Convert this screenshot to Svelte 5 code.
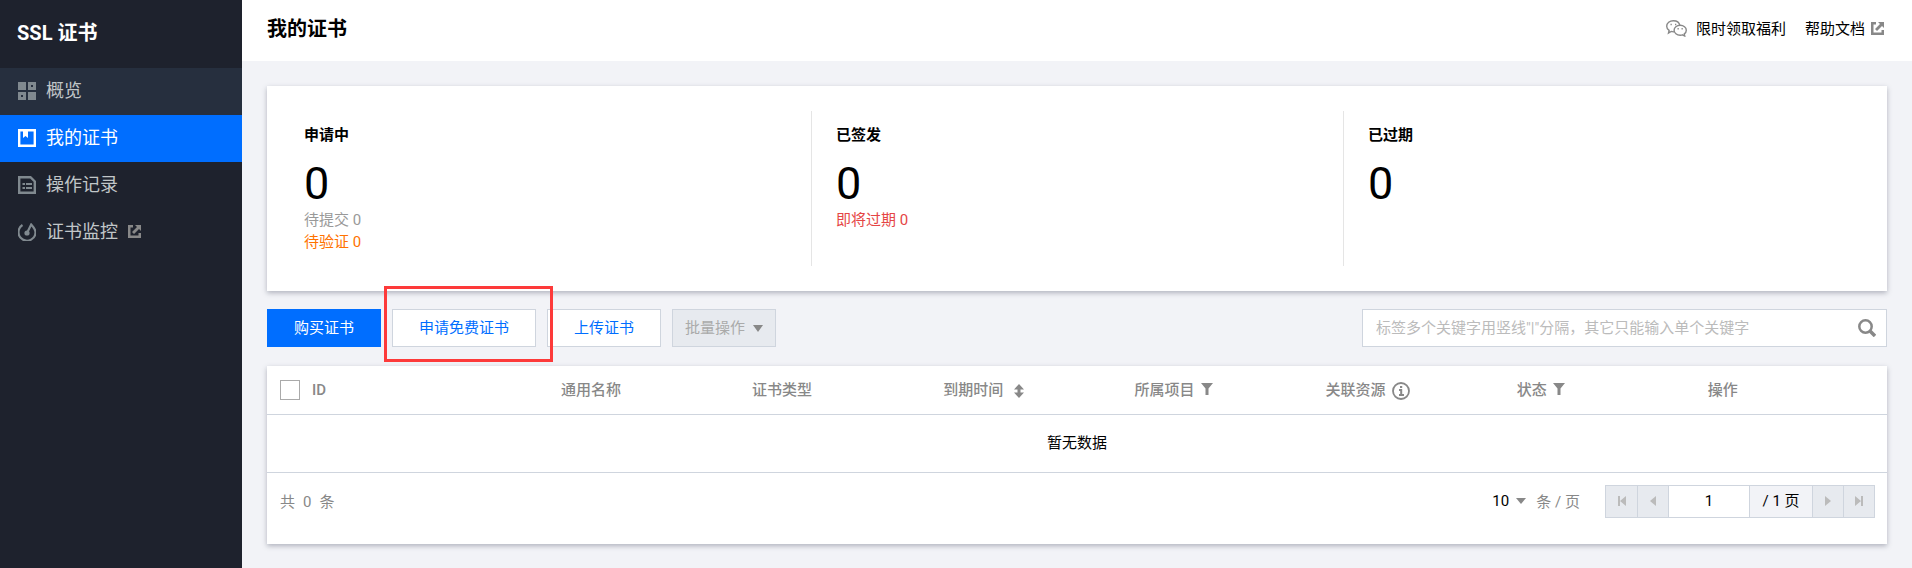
<script lang="ts">
	const nav = [
		{ id: 'overview', title: '概览', state: 'hover' },
		{ id: 'certs', title: '我的证书', state: 'active' },
		{ id: 'logs', title: '操作记录', state: '' },
		{ id: 'monitor', title: '证书监控', state: '' }
	];

	const stats = [
		{
			title: '申请中',
			count: 0,
			lines: [
				{ text: '待提交', count: 0, tone: 'muted' },
				{ text: '待验证', count: 0, tone: 'warning' }
			]
		},
		{ title: '已签发', count: 0, lines: [{ text: '即将过期', count: 0, tone: 'danger' }] },
		{ title: '已过期', count: 0, lines: [] }
	];

	const columns = [
		{ title: '通用名称', icon: '' },
		{ title: '证书类型', icon: '' },
		{ title: '到期时间', icon: 'sort' },
		{ title: '所属项目', icon: 'filter' },
		{ title: '关联资源', icon: 'info' },
		{ title: '状态', icon: 'filter' },
		{ title: '操作', icon: '' }
	];

	let keyword = $state('');
	let page = $state('1');
</script>

{#snippet external()}
	<svg class="external" width="13" height="13" viewBox="0 0 13 13" aria-hidden="true">
		<path d="M5 0v2.500H2.500v8h8V8H13v5H0V0z" fill="currentColor" />
		<path d="M7 0h6v6l-2-2-5 5-2-2 5-5z" fill="currentColor" />
	</svg>
{/snippet}

<div class="layout">
	<aside class="sidebar">
		<h2>SSL 证书</h2>
		<nav>
			{#each nav as item}
				<a href="#{item.id}" class="nav-item {item.state}">
					<svg width="18" height="18" viewBox="0 0 18 18" fill="none" stroke="currentColor" stroke-width="2" aria-hidden="true">
						{#if item.id === 'overview'}
							<path d="M0 0h8v8H0z" fill="currentColor" stroke="none" />
							<path d="M10 10h8v8h-8z" fill="currentColor" stroke="none" />
							<path d="M11.500 1.500h5v5h-5zM1.500 11.500h5v5h-5z" stroke-width="3" />
						{:else if item.id === 'certs'}
							<path d="M1.200 1.200h15.600v15.600H1.200z" stroke-width="2.400" />
							<path d="M5 2h5v7L7.500 7 5 9z" fill="currentColor" stroke="none" />
						{:else if item.id === 'logs'}
							<path d="M1.200 1.200h11.300l4.300 4.300v11.300H1.200z" stroke-width="2.400" />
							<path d="M4.500 8H7M8 8h6M4.500 12H7M8 12h6" />
						{:else}
							<path d="M4.500 2A8.500 8.500 0 1 0 17.500 9.500C17.500 6.500 15.500 4 13.200 1.500L9.500 9" stroke-width="2.200" />
							<circle cx="9" cy="10" r="2.600" fill="currentColor" stroke="none" />
						{/if}
					</svg>
					<span>{item.title}</span>
					{#if item.id === 'monitor'}{@render external()}{/if}
				</a>
			{/each}
		</nav>
	</aside>

	<main>
		<header>
			<h1>我的证书</h1>
			<div class="links">
				<a href="#gift">
					<svg class="wechat" width="21" height="17" viewBox="0 0 21 17" fill="none" stroke="#888" stroke-width="1.400" aria-hidden="true">
						<path d="M8 11.800c-1 .1-2-.1-2.800-.4L2.500 13l.6-2.600C1.500 9.300.7 7.900.7 6.300.7 3.200 3.700.7 7.300.7c3.300 0 6 1.900 6.500 4.600" />
						<path d="M14.200 5.300c3.400 0 6.100 2.200 6.100 4.900 0 1.500-.8 2.800-2 3.700l.4 2.100-2.200-1.200c-.7.3-1.500.4-2.300.4-3.400 0-6.100-2.200-6.100-5s2.700-4.900 6.100-4.900z" />
						<path d="M4.500 4.500h1.300M9 4.500h1.300M11.500 8.800h1.300M15.500 8.800h1.300" stroke-width="1.500" />
					</svg>
					限时领取福利
				</a>
				<a href="#docs">帮助文档 {@render external()}</a>
			</div>
		</header>

		<div class="content">
			<section class="card stats">
				{#each stats as stat}
					<div class="stat">
						<h3>{stat.title}</h3>
						<strong>{stat.count}</strong>
						{#each stat.lines as line}
							<a href="#certs" class={line.tone}>{line.text} {line.count}</a>
						{/each}
					</div>
				{/each}
			</section>

			<div class="toolbar">
				<button type="button" class="btn primary">购买证书</button>
				<div class="marked">
					<button type="button" class="btn">申请免费证书</button>
				</div>
				<button type="button" class="btn">上传证书</button>
				<button type="button" class="btn batch" disabled>
					批量操作
					<svg width="10" height="7" viewBox="0 0 10 7" aria-hidden="true"><path d="M0 0h10L5 7z" fill="#888" /></svg>
				</button>
				<form class="search" role="search">
					<input type="text" aria-label="搜索证书" placeholder={'标签多个关键字用竖线"|"分隔，其它只能输入单个关键字'} bind:value={keyword} />
					<button type="button" aria-label="搜索">
						<svg width="18" height="18" viewBox="0 0 18 18" fill="none" stroke="#888" aria-hidden="true">
							<circle cx="7.500" cy="7.500" r="6.200" stroke-width="2.500" />
							<path d="M12 12l5 5" stroke-width="3.500" />
						</svg>
					</button>
				</form>
			</div>

			<section class="card">
				<table>
					<thead>
						<tr>
							<th class="id">
								<label><input type="checkbox" aria-label="全选" /> ID</label>
							</th>
							{#each columns as column}
								<th class:sortable={column.icon === 'sort'}>
									<span>{column.title}</span>
									{#if column.icon === 'sort'}
										<svg width="10" height="14" viewBox="0 0 10 14" aria-hidden="true"><path d="M5 0l5 5.500H6.500v3H10L5 14 0 8.500h3.500v-3H0z" fill="#888" /></svg>
									{:else if column.icon === 'filter'}
										<svg class="filter" width="12" height="12" viewBox="0 0 12 12" aria-hidden="true"><path d="M0 0h12L7.500 5.500V12h-3V5.500z" fill="#888" /></svg>
									{:else if column.icon === 'info'}
										<svg width="18" height="18" viewBox="0 0 18 18" fill="none" stroke="#888" stroke-width="2" aria-hidden="true">
											<circle cx="9" cy="9" r="8" stroke-width="1.800" />
											<path d="M8 5h2.200M7 8h2.200v5M7 13h5" />
										</svg>
									{/if}
								</th>
							{/each}
						</tr>
					</thead>
					<tbody>
						<tr><td colspan="8">暂无数据</td></tr>
					</tbody>
				</table>

				<div class="footer">
					<div class="total"><span>共</span><span>0</span><span>条</span></div>
					<div class="pager">
						<div class="size">
							<select aria-label="每页条数">
								<option>10</option>
								<option>20</option>
								<option>50</option>
							</select>
							<svg width="10" height="6" viewBox="0 0 10 6" aria-hidden="true"><path d="M0 0h10L5 6z" fill="#888" /></svg>
						</div>
						<span class="unit">条 / 页</span>
						<div class="pages">
							<button type="button" aria-label="首页" disabled>
								<svg width="8" height="10" viewBox="0 0 8 10"><path d="M0 0h2v10H0zM8 0v10L2 5z" fill="#bbb" /></svg>
							</button>
							<button type="button" aria-label="上一页" disabled>
								<svg width="6" height="10" viewBox="0 0 6 10"><path d="M6 0v10L0 5z" fill="#bbb" /></svg>
							</button>
							<input type="text" aria-label="页码" bind:value={page} />
							<span class="count">/ 1 页</span>
							<button type="button" aria-label="下一页" disabled>
								<svg width="6" height="10" viewBox="0 0 6 10"><path d="M0 0v10l6-5z" fill="#bbb" /></svg>
							</button>
							<button type="button" aria-label="末页" disabled>
								<svg width="8" height="10" viewBox="0 0 8 10"><path d="M6 0h2v10H6zM0 0v10l6-5z" fill="#bbb" /></svg>
							</button>
						</div>
					</div>
				</div>
			</section>
		</div>
	</main>
</div>

<style>
	:global(body) {
		background: #f2f3f7;
	}

	.layout,
	.layout * {
		box-sizing: border-box;
	}

	.layout {
		display: flex;
		min-height: 100vh;
		font-family: Roboto, 'Noto Sans CJK SC', sans-serif;
		font-size: 15px;
		line-height: 22px;
		color: #000;
	}

	h1,
	h2,
	h3 {
		margin: 0;
	}

	a {
		color: inherit;
		text-decoration: none;
	}

	svg {
		flex: none;
	}

	button,
	input,
	select {
		font: inherit;
		border-radius: 0;
	}

	.sidebar {
		flex: none;
		width: 242px;
		background: #1e222d;
	}

	.sidebar h2 {
		padding: 0 17px 2px;
		font-size: 20px;
		line-height: 66px;
		color: #fff;
	}

	.nav-item {
		display: flex;
		align-items: center;
		gap: 10px;
		height: 47px;
		padding: 0 18px 2px;
		font-size: 18px;
		color: #c1c6c8;
	}

	.nav-item svg {
		color: #80898f;
	}

	.nav-item .external,
	.links .external {
		color: #888;
	}

	.nav-item.hover {
		background: #262f3e;
	}

	.nav-item.active,
	.nav-item.active svg {
		background: #006eff;
		color: #fff;
	}

	main {
		flex: 1;
		min-width: 0;
	}

	header {
		display: flex;
		align-items: center;
		justify-content: space-between;
		height: 61px;
		padding: 0 28px 4px 25px;
		background: #fff;
	}

	h1 {
		font-size: 20px;
	}

	.links {
		display: flex;
		gap: 19px;
	}

	.links a {
		display: flex;
		align-items: center;
		gap: 6px;
	}

	.wechat {
		margin-right: 3px;
	}

	.content {
		padding: 25px;
	}

	.card {
		background: #fff;
		box-shadow: 0 2px 5px rgba(54, 58, 80, 0.35);
	}

	.stats {
		display: grid;
		grid-template-columns: repeat(3, 1fr);
		padding: 25px 12px;
	}

	.stat {
		display: flex;
		flex-direction: column;
		align-items: flex-start;
		min-height: 155px;
		padding: 13px 25px;
	}

	.stat + .stat {
		padding-left: 24px;
		border-left: 1px solid #e5e5e5;
	}

	.stat h3 {
		font-size: 15px;
	}

	.stat strong {
		padding: 15px 0 2px;
		font-size: 45px;
		line-height: 46px;
		font-weight: 400;
	}

	.muted {
		color: #999;
	}

	.warning {
		color: #ff7200;
	}

	.danger {
		color: #e54545;
	}

	.toolbar {
		display: flex;
		gap: 11px;
		padding: 18px 0 19px;
	}

	.btn {
		height: 38px;
		padding: 0 26px;
		border: 1px solid #cfd5de;
		background: #fff;
		color: #006eff;
	}

	.primary {
		border-color: #006eff;
		background: #006eff;
		color: #fff;
	}

	.batch {
		display: flex;
		align-items: center;
		gap: 8px;
		padding: 0 12px;
		background: #e7eaef;
		color: #aaa;
	}

	.marked {
		position: relative;
	}

	/* callout frame around the free certificate button */
	.marked::after {
		content: '';
		position: absolute;
		z-index: 1;
		inset: -23px -17px -15px -8px;
		border: 3px solid #fd3a3a;
		pointer-events: none;
	}

	.search {
		display: flex;
		align-items: center;
		width: 525px;
		height: 38px;
		margin-left: auto;
		border: 1px solid #cfd5de;
		background: #fff;
	}

	.search input {
		flex: 1;
		min-width: 0;
		padding: 0 13px;
		border: 0;
		outline: 0;
		background: none;
	}

	.search input::placeholder {
		color: #bbb;
	}

	.search button {
		display: flex;
		padding: 0 10px;
		border: 0;
		background: none;
	}

	table {
		width: 100%;
		table-layout: fixed;
		border-collapse: collapse;
	}

	th {
		width: 11.8%;
		height: 48px;
		padding: 0 12px;
		text-align: left;
		font-weight: 500;
		color: #888;
	}

	th.id {
		width: auto;
		padding-left: 13px;
	}

	th label {
		display: flex;
		align-items: center;
		gap: 12px;
	}

	th svg {
		margin-left: 3px;
		vertical-align: middle;
	}

	th .filter {
		vertical-align: baseline;
	}

	th.sortable svg {
		margin-left: 7px;
	}

	input[type='checkbox'] {
		appearance: none;
		width: 20px;
		height: 20px;
		margin: 0;
		border: 1px solid #aaa;
		background: #fff;
	}

	tr {
		border-bottom: 1px solid #cfd5de;
	}

	td {
		height: 58px;
		padding: 0;
		text-align: center;
	}

	.footer {
		display: flex;
		align-items: flex-start;
		justify-content: space-between;
		padding: 12px 12px 25px 13px;
		line-height: 34px;
		color: #888;
	}

	.total {
		display: flex;
		gap: 8px;
	}

	.pager {
		display: flex;
		height: 33px;
	}

	.size {
		display: flex;
		align-items: center;
		gap: 7px;
	}

	.size select {
		appearance: none;
		width: 17px;
		padding: 0;
		border: 0;
		background: none;
		color: #000;
	}

	.unit {
		margin: 0 25px 0 10px;
	}

	.pages {
		display: flex;
		height: 33px;
		border: 1px solid #cfd5de;
		line-height: 31px;
		color: #000;
	}

	.pages button {
		display: flex;
		align-items: center;
		justify-content: center;
		width: 31px;
		padding: 0;
		border: 0;
		background: #e7eaef;
	}

	.pages input {
		width: 81px;
		padding: 0;
		border: 0;
		text-align: center;
		background: #fff;
	}

	.count {
		width: 63px;
		text-align: center;
		background: #f2f3f7;
	}

	.pages > :not(:first-child) {
		border-left: 1px solid #cfd5de;
	}
</style>
